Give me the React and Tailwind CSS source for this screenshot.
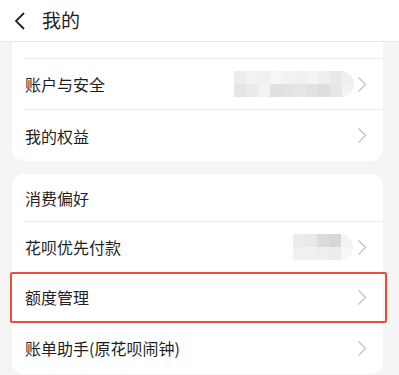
const font = { fontFamily: '"Noto Sans CJK SC", "Noto Sans", sans-serif' };

function Chevron() {
  return (
    <svg width="10" height="17" viewBox="0 0 10 17" className="shrink-0">
      <polyline points="1.5,1.5 8.5,8.5 1.5,15.5" fill="none" stroke="#c4c4c4" strokeWidth="1.4" />
    </svg>
  );
}

function Blur({ cells }) {
  return (
    <div className="flex flex-col rounded-r-full overflow-hidden">
      {cells.map((row, r) => (
        <div key={r} className="flex">
          {row.map((c, i) => (
            <div key={i} className="w-3 h-[13px]" style={{ background: c }} />
          ))}
        </div>
      ))}
    </div>
  );
}

const accountCells = [
  ["#ededed", "#f2f2f2", "#f0f0f0", "#f6f6f6", "#f3f3f3", "#f1f1f1", "#f4f4f4", "#eeeeee", "#e9e9e9", "#f0f0f0"],
  ["#e6e6e6", "#eaeaea", "#f2f2f2", "#e0e0e0", "#e3e3e3", "#e6e6e6", "#e2e2e2", "#dedede", "#e7e7e7", "#f3f3f3"],
];

const payCells = [
  ["#ececec", "#e8e8e8", "#dcdcdc", "#d7d7d7", "#f3f3f3"],
  ["#f1f1f1", "#f0f0f0", "#eeeeee", "#ececec", "#f7f7f7"],
];

function Row({ label, children, arrow = true, highlight = false }) {
  return (
    <div className="relative flex items-center h-[50px] pl-[13px] pr-[16px]">
      <span className="flex-1 text-[16px] text-[#1f1f1f]">{label}</span>
      {children}
      {arrow && <Chevron />}
      {highlight && (
        <div className="absolute -left-[2px] -right-[4px] top-0 bottom-[-1px] border-2 border-[#ee4b3e] rounded-[2px]" />
      )}
    </div>
  );
}

const Divider = () => <div className="ml-3 h-px bg-[#ececec]" />;

export default function App() {
  return (
    <div className="w-[399px] h-[375px] overflow-hidden bg-[#f5f5f5]" style={font}>
      <div className="h-[42px] bg-white border-b border-[#e6e6e6] flex items-center">
        <svg width="14" height="20" viewBox="0 0 14 20" className="ml-[13px]">
          <polyline points="11,2 3,10 11,18" fill="none" stroke="#222" strokeWidth="1.8" />
        </svg>
        <span className="ml-[15px] text-[19px] text-[#1f1f1f]">我的</span>
      </div>
      <div className="pl-3 pr-4">
        <div className="bg-white rounded-b-xl">
          <div className="h-[16px]" />
          <Divider />
          <Row label="账户与安全">
            <div className="mr-[3px]">
              <Blur cells={accountCells} />
            </div>
          </Row>
          <Divider />
          <div className="h-[51px] flex flex-col justify-center">
            <Row label="我的权益" />
          </div>
        </div>
        <div className="mt-[13px] bg-white rounded-xl pb-[1px]">
          <div className="h-[47px] flex items-center pl-[13px] text-[16px] text-[#1f1f1f]">消费偏好</div>
          <Divider />
          <Row label="花呗优先付款">
            <div className="mr-[4px]">
              <Blur cells={payCells} />
            </div>
          </Row>
          <Row label="额度管理" highlight />
          <Divider />
          <Row label="账单助手(原花呗闹钟)" />
        </div>
      </div>
    </div>
  );
}
